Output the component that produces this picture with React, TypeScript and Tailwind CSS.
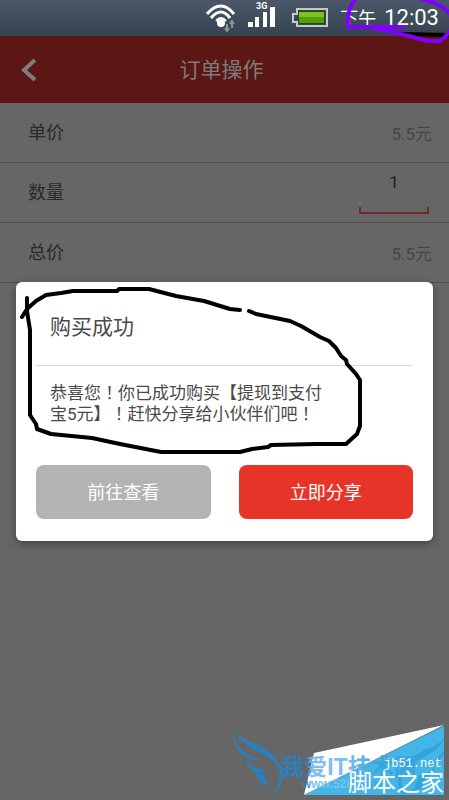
import React from "react";

type RowProps = {
  label: string;
  children: React.ReactNode;
};

const StatusBar = () => {
  return (
    <div className="h-9 bg-linear-to-b from-[#4a5869] to-[#36424f] flex items-center justify-end pr-[10px] text-white">
      <svg className="w-8 h-9 mr-2.5" viewBox="0 0 32 36" fill="none">
        <g stroke="#fff" strokeWidth="3">
          <path d="M1 14Q15-2 28 14" />
          <path d="M5 18Q15 6 24 18" />
          <path d="M10 21Q15 15 20 21" strokeWidth="2" />
        </g>
        <circle cx="15" cy="23" r="4" fill="#fff" />
        <path d="M21 24v6m-2-2 2 3 2-3M26 28v-6m-2 2 2-3 2 3" stroke="#8b949d" strokeWidth="2" />
      </svg>
      <svg className="w-7 h-9 mr-4" viewBox="0 0 28 36" fill="#fff">
        <text x="8" y="9" fontSize="9" fontWeight="700" fontFamily="Roboto">
          3G
        </text>
        <path d="M0 22h5v5H0zM7 17h4v10H7zM15 12h4v15h-4zM22 7h5v20h-5z" />
      </svg>
      <svg className="w-9 h-5 mr-3" viewBox="0 0 36 20">
        <path d="M5 1h30v17H5v-4H1V6h4z" fill="#3a4654" stroke="#c5c9cd" strokeWidth="2" />
        <path d="M6 3h27v13H6z" fill="#244805" />
        <path d="M7 4h25v11H7z" fill="#4f9f05" />
        <path d="M7 4h25v5H7z" fill="#7cc41e" />
      </svg>
      <p className="flex items-baseline gap-2 whitespace-nowrap">
        <span className="text-[18px]">下午</span>
        <span className="text-[22px] leading-8">12:03</span>
      </p>
    </div>
  );
};

const Row = ({ label, children }: RowProps) => {
  return (
    <div className="h-15 border-b border-[#505050] pl-7 pr-[17px] flex items-center justify-between">
      <label htmlFor={label} className="text-[18px] text-[#292929]">
        {label}
      </label>
      {children}
    </div>
  );
};

const Price = ({ id }: { id: string }) => {
  return (
    <output id={id} className="pt-1 text-[17px] text-[#464646]">
      5.5元
    </output>
  );
};

// full-width mark centred in its cell
const Bang = () => {
  return <span className="font-['Noto_Sans_CJK_TC',sans-serif]" lang="zh-TW">！</span>;
};

const Dialog = () => {
  return (
    <section
      role="dialog"
      aria-labelledby="dialog-title"
      className="absolute inset-x-4 top-[282px] rounded-md bg-white px-5 pb-[22px] shadow-[0_3px_8px_rgba(0,0,0,0.35)]"
    >
      <h2
        id="dialog-title"
        className="h-21 border-b border-[#dcdcdc] pt-2 px-[14px] flex items-center text-[21px] text-[#4a4a4a]"
      >
        购买成功
      </h2>
      <p className="mt-4 pl-[14px] text-[17px] leading-5 text-[#4a4a4a] whitespace-nowrap">
        恭喜您
        <Bang />
        你已成功购买【提现到支付
        <br />
        宝5元】
        <Bang />
        赶快分享给小伙伴们吧
        <Bang />
      </p>
      <div className="mt-[41px] grid grid-cols-2 gap-7 text-[18px] text-white">
        <button className="h-[54px] rounded-lg bg-[#b3b3b3]">前往查看</button>
        <button className="h-[54px] rounded-lg bg-[#e73429]">立即分享</button>
      </div>
    </section>
  );
};

const Marks = () => {
  return (
    <svg
      className="absolute left-0 top-0 w-[449px] h-[470px] pointer-events-none"
      viewBox="0 0 449 470"
      fill="none"
      strokeWidth="4"
      strokeLinecap="round"
      strokeLinejoin="round"
    >
      <path d="M378 30 400 32 449 33v4l-40-1z" fill="#000" />
      <path
        d="M355 0C350 5 347 12 348 27L404 27M376 29C398 32 420 40 430 41L440 41C444 39 447 35 451 29M421 -1C432 1 443 5 451 15"
        stroke="#7f00ff"
      />
      <path
        d="M27 298V311L30 330V415L36 424L37 429L51 434L92 438L120 444L161 452H240L252 449L268 447L271 445L316 444H346L357 434L360 426V380L356 374L347 364L346 360L341 356L336 348L329 341L320 337L301 326L290 321L256 314L249 311M240 310L230 309L204 301L176 296L149 289H119L117 291H73L61 293L46 295L36 301L27 309L22 317"
        stroke="#000"
      />
    </svg>
  );
};

const Wing = () => {
  return (
    <>
      <path d="M12 18C24 68 62 72 100 92C160 125 195 190 130 237C157 207 165 168 140 138C100 104 30 96 12 18z" />
      <path d="M15 55C29 98 52 117 95 132C50 136 18 102 15 55z" />
      <path d="M52 132C75 158 93 159 118 162L101 168C107 179 114 184 113 193L124 210C96 205 91 194 88 182C77 174 89 172 76 165C63 158 57 150 52 132z" />
    </>
  );
};

const Watermark = () => {
  return (
    <svg className="absolute right-0 top-[716px] w-[222px] h-[84px]" viewBox="227 716 222 84">
      <defs>
        <linearGradient id="ink" gradientUnits="userSpaceOnUse" x1="281" y1="0" x2="411" y2="0">
          <stop offset="0" stopColor="#2b80bb" />
          <stop offset="0.2" stopColor="#2b80bb" />
          <stop offset="0.24" stopColor="#7fbfee" />
          <stop offset="0.5" stopColor="#7fbfee" />
          <stop offset="0.75" stopColor="#3ba4de" />
        </linearGradient>
        <clipPath id="corner">
          <path d="M444 726V795H304z" />
        </clipPath>
      </defs>
      <path d="M314 753 444 725 304 795z" fill="#fff" />
      <path d="M444 726V795H304z" fill="#42b6e9" />
      <g fill="#2b80bb" transform="translate(228 716) scale(0.333)">
        <Wing />
      </g>
      <g clipPath="url(#corner)">
        <g fill="#35a2db" transform="translate(453 722) scale(-0.333 0.333)">
          <Wing />
        </g>
      </g>
      <g fill="url(#ink)" fontWeight="700">
        <text x="281" y="775" fontSize="23">
          我爱IT技术网
        </text>
        <text x="302" y="788" fontSize="12" fontFamily="Liberation Sans">
          www.52ij.com
        </text>
      </g>
      <g fill="#fff">
        <text x="384" y="767" fontSize="12" fontFamily="Liberation Mono">
          jb51.net
        </text>
        <text x="348" y="791" fontSize="24">
          脚本之家
        </text>
      </g>
    </svg>
  );
};

const App = () => {
  return (
    <div className="relative min-h-screen bg-[#666] overflow-hidden font-[Roboto,'Noto_Sans_CJK_SC',sans-serif]">
      <StatusBar />
      <header className="h-[67px] bg-[#5c1613] pl-4 pr-[22px] grid grid-cols-[24px_1fr_24px] items-center text-[#7d7d7d]">
        <button aria-label="返回" className="pl-1">
          <svg className="w-5 h-6" viewBox="0 0 20 24" fill="none" stroke="currentColor" strokeWidth="4">
            <path d="M15 2 4 12 15 22" />
          </svg>
        </button>
        <h1 className="pt-0.5 text-center text-[21px]">订单操作</h1>
      </header>
      <main>
        <Row label="单价">
          <Price id="单价" />
        </Row>
        <Row label="数量">
          <div className="w-[73px] h-full pr-[3px]">
            <input
              id="数量"
              defaultValue="1"
              className="mt-2 w-full h-6 text-center text-[17px] text-[#222]"
            />
            <div className="mt-3 h-[7px] border-x-2 border-b-2 border-[#762a27]" />
          </div>
        </Row>
        <Row label="总价">
          <Price id="总价" />
        </Row>
      </main>
      <Dialog />
      <Watermark />
      <Marks />
    </div>
  );
};

export default App;
